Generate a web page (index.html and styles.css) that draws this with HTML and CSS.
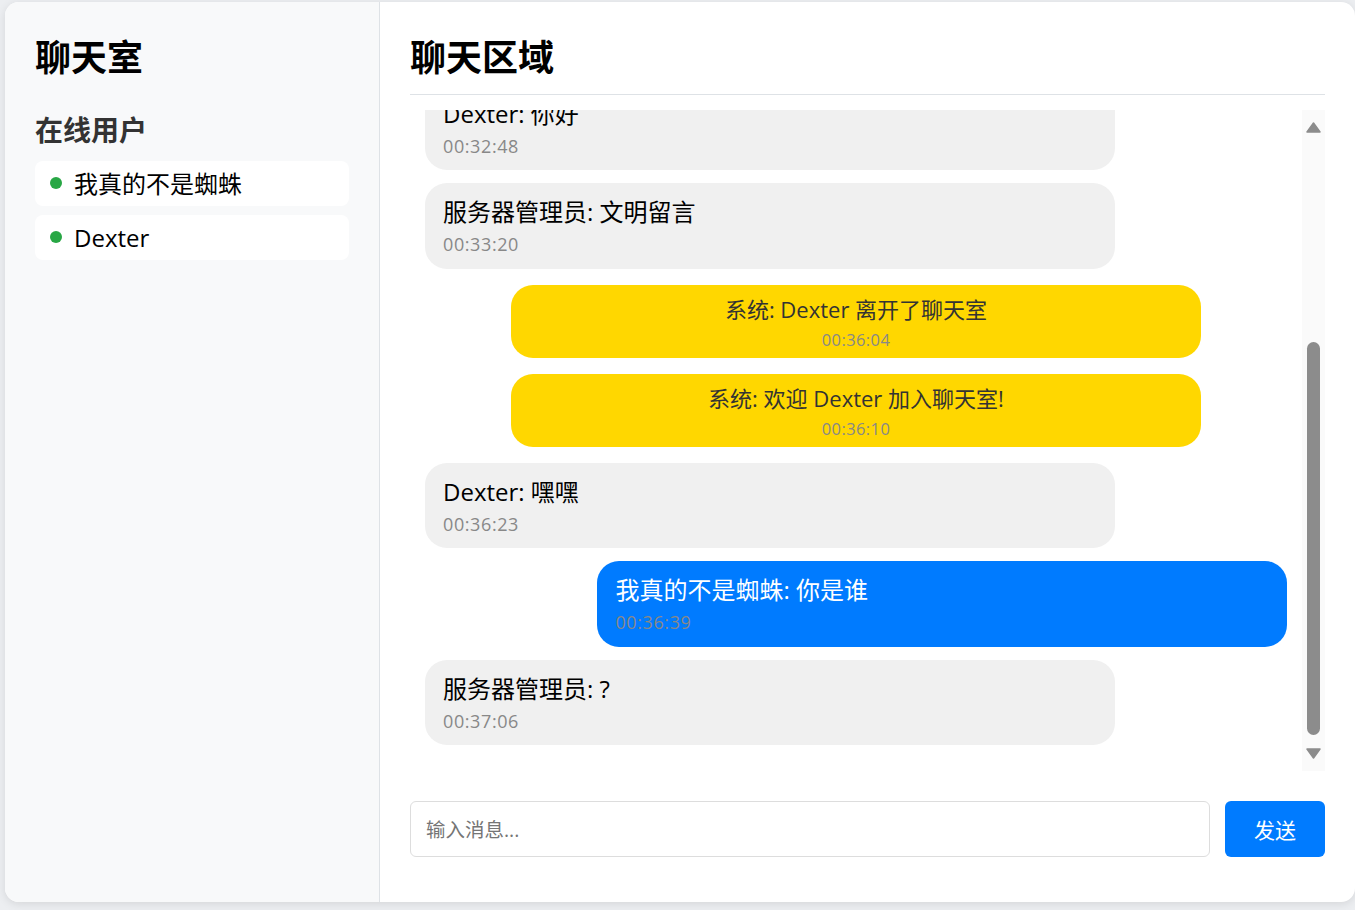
FILE: index.html
```html
<!DOCTYPE html>
<html lang="zh-CN">
<head>
<meta charset="utf-8">
<title>聊天室</title>
<link rel="stylesheet" href="styles.css">
</head>
<body>
<div class="app">
  <aside class="sidebar">
    <h1 class="side-title">聊天室</h1>
    <h2 class="side-sub">在线用户</h2>
    <ul class="users">
      <li class="user"><span class="dot"></span><span>我真的不是蜘蛛</span></li>
      <li class="user"><span class="dot"></span><span>Dexter</span></li>
    </ul>
  </aside>
  <main class="chat">
    <header class="chat-header">
      <h2 class="chat-title">聊天区域</h2>
    </header>
    <div class="chat-body">
      <div class="msg-list">
        <div class="msg-inner">
          <div class="msg other"><div class="text">Dexter: 你好</div><div class="time">00:32:48</div></div>
          <div class="msg other"><div class="text">服务器管理员: 文明留言</div><div class="time">00:33:20</div></div>
          <div class="msg system"><div class="text">系统: Dexter 离开了聊天室</div><div class="time">00:36:04</div></div>
          <div class="msg system"><div class="text">系统: 欢迎 Dexter 加入聊天室!</div><div class="time">00:36:10</div></div>
          <div class="msg other"><div class="text">Dexter: 嘿嘿</div><div class="time">00:36:23</div></div>
          <div class="msg mine"><div class="text">我真的不是蜘蛛: 你是谁</div><div class="time">00:36:39</div></div>
          <div class="msg other"><div class="text">服务器管理员: ?</div><div class="time">00:37:06</div></div>
        </div>
      </div>
      <div class="scrollbar">
        <svg class="arrow" width="15" height="11" viewBox="0 0 15 11"><polygon points="7.5,1 14,10 1,10" fill="#8c8c8c" stroke="#8c8c8c" stroke-width="1.5" stroke-linejoin="round"/></svg>
        <div class="thumb"></div>
        <svg class="arrow down" width="15" height="11" viewBox="0 0 15 11"><polygon points="1,1 14,1 7.5,10" fill="#8c8c8c" stroke="#8c8c8c" stroke-width="1.5" stroke-linejoin="round"/></svg>
      </div>
    </div>
    <form class="composer" onsubmit="return false;">
      <input class="input" type="text" placeholder="输入消息..." autofocus>
      <button class="send" type="button">发送</button>
    </form>
  </main>
</div>
</body>
</html>
```

FILE: styles.css
```css
* { box-sizing: border-box; }

html, body {
  margin: 0;
  height: 100%;
}

body {
  background: #eceef1;
  padding: 2px 0 0 5px;
  font-family: "Open Sans", "Noto Sans CJK SC", sans-serif;
  color: #000;
  overflow: hidden;
}

.app {
  display: flex;
  width: 1350px;
  height: 900px;
  background: #fff;
  border-radius: 14px;
  box-shadow: 0 2px 10px rgba(0, 0, 0, 0.1);
  overflow: hidden;
}

/* Sidebar */
.sidebar {
  width: 375px;
  flex: none;
  background: #f8f9fa;
  border-right: 1px solid #dee2e6;
  padding: 30px;
}

.side-title {
  margin: 0;
  font-size: 36px;
  line-height: 51px;
  font-weight: 700;
  color: #000;
}

.side-sub {
  margin: 29px 0 13px;
  font-size: 28px;
  line-height: 36px;
  font-weight: 700;
  color: #333;
}

.users {
  list-style: none;
  margin: 0;
  padding: 0;
  display: flex;
  flex-direction: column;
  gap: 9px;
}

.user {
  display: flex;
  align-items: center;
  gap: 12px;
  height: 45px;
  padding: 0 15px;
  background: #fff;
  border-radius: 8px;
  font-size: 24px;
  line-height: 31px;
  color: #000;
}

.dot {
  width: 12px;
  height: 12px;
  border-radius: 50%;
  background: #28a745;
  flex: none;
  margin-top: -1px;
}

/* Chat */
.chat {
  flex: 1;
  min-width: 0;
  display: flex;
  flex-direction: column;
  padding: 30px 30px 45px;
}

.chat-header {
  padding-bottom: 11px;
  border-bottom: 1px solid #dee2e6;
}

.chat-title {
  margin: 0;
  font-size: 36px;
  line-height: 51px;
  font-weight: 700;
  color: #000;
}

.chat-body {
  flex: 1;
  min-height: 0;
  margin-top: 15px;
  display: flex;
}

.msg-list {
  flex: 1;
  min-width: 0;
  overflow: hidden;
  display: flex;
  flex-direction: column;
  justify-content: flex-end;
  padding: 0 15px 13px;
}

.msg-inner {
  flex: none;
}

.msg {
  width: 80%;
  border-radius: 22px;
  padding: 12px 18px;
  margin-bottom: 13px;
}

.msg .text {
  font-size: 24px;
  line-height: 34px;
}

.msg .time {
  margin-top: 4px;
  font-size: 18px;
  line-height: 23.5px;
  letter-spacing: 0.6px;
  color: #888;
}

.msg.other {
  background: #f0f0f0;
  color: #000;
}

.msg.mine {
  background: #007bff;
  color: #fff;
  margin-left: auto;
}

.msg.system {
  background: #ffd700;
  color: #333;
  text-align: center;
  margin: 16px auto;
  padding: 9px 18px 8px;
}

.msg.system .text {
  font-size: 22px;
  line-height: 30px;
}

.msg.system .time {
  margin-top: 6px;
  font-size: 16.5px;
  line-height: 20px;
  letter-spacing: 0.4px;
}

/* Scrollbar */
.scrollbar {
  width: 23px;
  flex: none;
  background: #fafafa;
  display: flex;
  flex-direction: column;
  align-items: center;
  padding: 12px 0;
}

.arrow {
  display: block;
  flex: none;
}

.thumb {
  width: 13px;
  height: 393px;
  margin-top: auto;
  border-radius: 7px;
  background: #8c8c8c;
}

.arrow.down {
  margin-top: 13px;
}

/* Composer */
.composer {
  margin: 30px 0 0;
  display: flex;
  gap: 15px;
  height: 56px;
}

.input {
  flex: 1;
  min-width: 0;
  height: 56px;
  border: 1px solid #ddd;
  border-radius: 6px;
  padding: 0 15px;
  font-family: "Open Sans", "Noto Sans CJK SC", sans-serif;
  font-size: 19.5px;
  color: #000;
  outline: none;
  background: #fff;
}

.input::placeholder {
  color: #757575;
}

.send {
  width: 100px;
  height: 56px;
  border: none;
  border-radius: 6px;
  background: #007bff;
  color: #fff;
  font-family: "Open Sans", "Noto Sans CJK SC", sans-serif;
  font-size: 21px;
  cursor: pointer;
}
```
